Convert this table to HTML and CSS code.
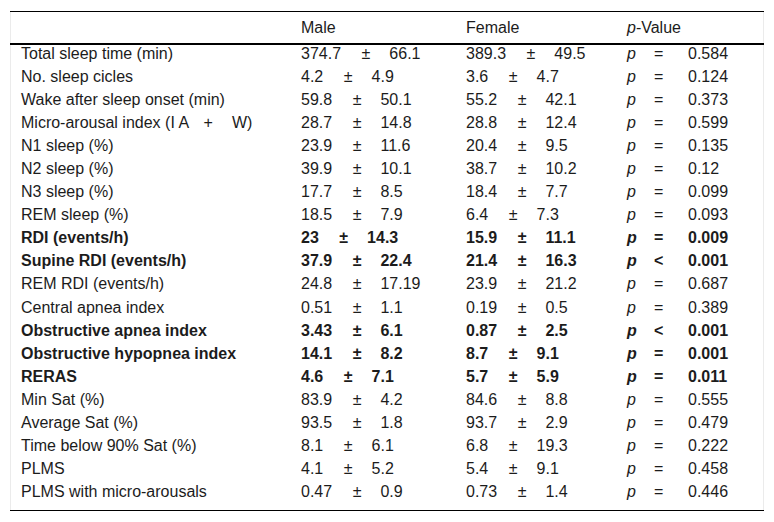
FILE: index.html
```html
<!DOCTYPE html>
<html lang="en">
<head>
<meta charset="utf-8">
<title>Polysomnography by sex</title>
<link rel="stylesheet" href="styles.css">
</head>
<body>
<div class="table-box">
  <table class="data">
    <colgroup>
      <col class="c-label">
      <col class="c-male">
      <col class="c-female">
      <col class="c-p">
    </colgroup>
    <thead>
      <tr>
        <th></th>
        <th>Male</th>
        <th>Female</th>
        <th><i>p</i>-Value</th>
      </tr>
    </thead>
    <tbody>
      <tr><td>Total sleep time (min)</td><td>374.7<span class="pm">±</span>66.1</td><td>389.3<span class="pm">±</span>49.5</td><td><span class="pv">p</span><span class="op">=</span>0.584</td></tr>
      <tr><td>No. sleep cicles</td><td>4.2<span class="pm">±</span>4.9</td><td>3.6<span class="pm">±</span>4.7</td><td><span class="pv">p</span><span class="op">=</span>0.124</td></tr>
      <tr><td>Wake after sleep onset (min)</td><td>59.8<span class="pm">±</span>50.1</td><td>55.2<span class="pm">±</span>42.1</td><td><span class="pv">p</span><span class="op">=</span>0.373</td></tr>
      <tr><td>Micro-arousal index (I A<span class="plus">+</span>W)</td><td>28.7<span class="pm">±</span>14.8</td><td>28.8<span class="pm">±</span>12.4</td><td><span class="pv">p</span><span class="op">=</span>0.599</td></tr>
      <tr><td>N1 sleep (%)</td><td>23.9<span class="pm">±</span>11.6</td><td>20.4<span class="pm">±</span>9.5</td><td><span class="pv">p</span><span class="op">=</span>0.135</td></tr>
      <tr><td>N2 sleep (%)</td><td>39.9<span class="pm">±</span>10.1</td><td>38.7<span class="pm">±</span>10.2</td><td><span class="pv">p</span><span class="op">=</span>0.12</td></tr>
      <tr><td>N3 sleep (%)</td><td>17.7<span class="pm">±</span>8.5</td><td>18.4<span class="pm">±</span>7.7</td><td><span class="pv">p</span><span class="op">=</span>0.099</td></tr>
      <tr><td>REM sleep (%)</td><td>18.5<span class="pm">±</span>7.9</td><td>6.4<span class="pm">±</span>7.3</td><td><span class="pv">p</span><span class="op">=</span>0.093</td></tr>
      <tr class="sig"><td>RDI (events/h)</td><td>23<span class="pm">±</span>14.3</td><td>15.9<span class="pm">±</span>11.1</td><td><span class="pv">p</span><span class="op">=</span>0.009</td></tr>
      <tr class="sig"><td>Supine RDI (events/h)</td><td>37.9<span class="pm">±</span>22.4</td><td>21.4<span class="pm">±</span>16.3</td><td><span class="pv">p</span><span class="op">&lt;</span>0.001</td></tr>
      <tr><td>REM RDI (events/h)</td><td>24.8<span class="pm">±</span>17.19</td><td>23.9<span class="pm">±</span>21.2</td><td><span class="pv">p</span><span class="op">=</span>0.687</td></tr>
      <tr><td>Central apnea index</td><td>0.51<span class="pm">±</span>1.1</td><td>0.19<span class="pm">±</span>0.5</td><td><span class="pv">p</span><span class="op">=</span>0.389</td></tr>
      <tr class="sig"><td>Obstructive apnea index</td><td>3.43<span class="pm">±</span>6.1</td><td>0.87<span class="pm">±</span>2.5</td><td><span class="pv">p</span><span class="op">&lt;</span>0.001</td></tr>
      <tr class="sig"><td>Obstructive hypopnea index</td><td>14.1<span class="pm">±</span>8.2</td><td>8.7<span class="pm">±</span>9.1</td><td><span class="pv">p</span><span class="op">=</span>0.001</td></tr>
      <tr class="sig"><td>RERAS</td><td>4.6<span class="pm">±</span>7.1</td><td>5.7<span class="pm">±</span>5.9</td><td><span class="pv">p</span><span class="op">=</span>0.011</td></tr>
      <tr><td>Min Sat (%)</td><td>83.9<span class="pm">±</span>4.2</td><td>84.6<span class="pm">±</span>8.8</td><td><span class="pv">p</span><span class="op">=</span>0.555</td></tr>
      <tr><td>Average Sat (%)</td><td>93.5<span class="pm">±</span>1.8</td><td>93.7<span class="pm">±</span>2.9</td><td><span class="pv">p</span><span class="op">=</span>0.479</td></tr>
      <tr><td>Time below 90% Sat (%)</td><td>8.1<span class="pm">±</span>6.1</td><td>6.8<span class="pm">±</span>19.3</td><td><span class="pv">p</span><span class="op">=</span>0.222</td></tr>
      <tr><td>PLMS</td><td>4.1<span class="pm">±</span>5.2</td><td>5.4<span class="pm">±</span>9.1</td><td><span class="pv">p</span><span class="op">=</span>0.458</td></tr>
      <tr><td>PLMS with micro-arousals</td><td>0.47<span class="pm">±</span>0.9</td><td>0.73<span class="pm">±</span>1.4</td><td><span class="pv">p</span><span class="op">=</span>0.446</td></tr>
    </tbody>
  </table>
</div>
</body>
</html>
```

FILE: styles.css
```css
html, body {
  margin: 0;
  padding: 0;
  background: #ffffff;
}

body {
  font-family: "Liberation Sans", Arial, sans-serif;
  font-size: 16px;
  color: #1c1c1c;
}

.table-box {
  width: 752px;
  margin: 11px 0 0 10px;
  border-left: 1px solid #ebebeb;
  border-right: 1px solid #ebebeb;
}

.data {
  width: 754px;
  margin: 0 -1px;
  table-layout: fixed;
  border-collapse: separate;
  border-spacing: 0;
}

.c-label { width: 280px; }
.c-male { width: 165px; }
.c-female { width: 161px; }
.c-p { width: 148px; }

.data th {
  text-align: left;
  font-weight: normal;
  line-height: 18px;
  padding: 7px 11px 6px;
  border-top: 1px solid #000;
  border-bottom: 2px solid #000;
  white-space: nowrap;
}

.data td {
  text-align: left;
  vertical-align: top;
  line-height: 13px;
  padding: 2px 11px 8.05px;
  white-space: nowrap;
}

.data tbody tr:last-child td {
  padding-bottom: 12px;
  border-bottom: 1px solid #000;
}

.data .sig td {
  font-weight: bold;
}

.pm {
  display: inline-block;
  margin: 0 19px 0 20.5px;
}

.plus {
  display: inline-block;
  margin: 0 19px 0 14.5px;
}

.pv {
  display: inline-block;
  width: 27px;
  font-style: italic;
}

.op {
  display: inline-block;
  width: 34px;
}
```
